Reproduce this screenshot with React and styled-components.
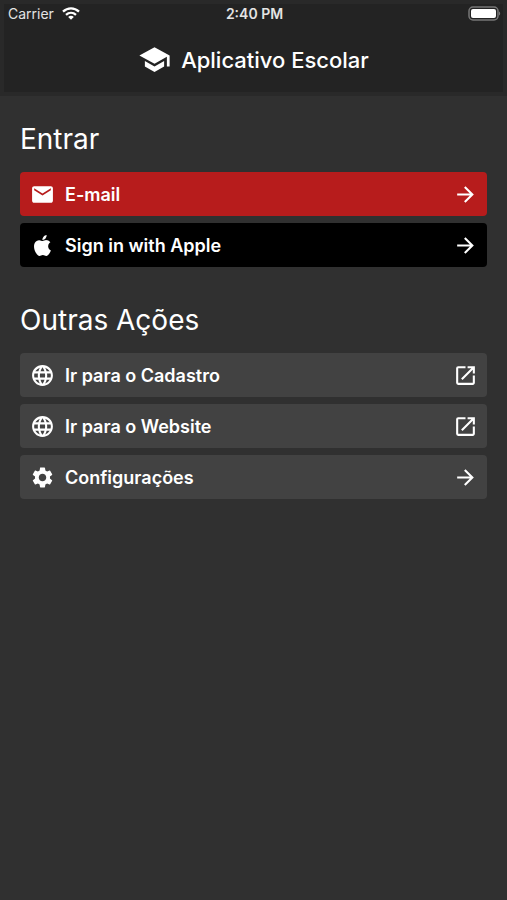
import React from "react";
import styled, { createGlobalStyle } from "styled-components";
import {
  MdArrowForward,
  MdEmail,
  MdLanguage,
  MdSchool,
  MdSettings,
} from "react-icons/md";

const GlobalStyle = createGlobalStyle`
  * {
    box-sizing: border-box;
  }
  body {
    margin: 0;
    background-color: #303030;
    color: #fff;
    font-family: Inter, "Liberation Sans", sans-serif;
  }
`;

const Screen = styled.div`
  min-height: 100vh;
  background-color: #303030;
`;

const Header = styled.header`
  height: 96px;
  border: 4px solid #292929;
  background-color: #232323;
`;

const StatusBar = styled.div`
  display: grid;
  grid-template-columns: 1fr auto 1fr;
  align-items: center;
  height: 19px;
  padding: 0 2px 0 4px;
  font-size: 14px;
  color: #e4e4e4;
`;

const Carrier = styled.span`
  display: flex;
  align-items: center;
  gap: 8px;
`;

const Clock = styled.time`
  font-weight: 600;
`;

const Battery = styled.svg`
  justify-self: end;
`;

const Brand = styled.div`
  display: flex;
  justify-content: center;
  align-items: center;
  gap: 10px;
  height: 67px;
  padding-top: 6px;
`;

const Title = styled.h1`
  margin: 0;
  font-size: 22px;
  line-height: 32px;
  font-weight: 500;
`;

const Main = styled.main`
  padding: 24px 20px;
`;

const Section = styled.section`
  margin-bottom: 34px;
`;

const Heading = styled.h2`
  margin: 0 0 14px;
  font-size: 28px;
  line-height: 38px;
  font-weight: 400;
`;

const Actions = styled.div`
  display: flex;
  flex-direction: column;
  gap: 7px;
`;

const ActionButton = styled.button`
  display: flex;
  align-items: center;
  gap: 10px;
  width: 100%;
  height: 44px;
  padding: 0 9px 0 10px;
  border: none;
  border-radius: 4px;
  color: white;
  background-color: ${({ $color }) => $color || "#424242"};
  font-family: inherit;
  font-size: 18px;
  font-weight: 600;
  text-align: left;
  text-decoration: none;
  cursor: pointer;
`;

const Label = styled.span`
  flex: 1;
`;

function WifiIcon() {
  return (
    <svg width="18" height="13" viewBox="0 0 18 13" fill="none" stroke="#fff" strokeWidth="2.3" aria-hidden="true">
      <path d="M1 4.6C5.6 0.3 12.4 0.3 17 4.6" />
      <path d="M4 7.9C6.9 5.3 11.1 5.3 14 7.9" />
      <path d="M9 12.7 6.2 9.9C7.8 8.5 10.2 8.5 11.8 9.9Z" fill="#fff" stroke="none" />
    </svg>
  );
}

function AppleIcon() {
  return (
    <svg width="25" height="25" viewBox="0 0 24 24" fill="currentColor" aria-hidden="true">
      <path d="M18.71 19.5c-.83 1.24-1.71 2.45-3.05 2.47-1.34.03-1.77-.79-3.29-.79-1.53 0-2 .77-3.27.82-1.31.05-2.3-1.32-3.14-2.53C4.25 17 2.94 12.45 4.7 9.39c.87-1.52 2.43-2.48 4.12-2.51 1.28-.02 2.5.87 3.29.87.78 0 2.26-1.07 3.81-.91.65.03 2.47.26 3.64 1.98-.09.06-2.17 1.28-2.15 3.81.03 3.02 2.65 4.03 2.68 4.04-.03.07-.42 1.44-1.38 2.83M13 3.5c.73-.83 1.94-1.46 2.94-1.5.13 1.17-.34 2.35-1.04 3.19-.69.85-1.83 1.51-2.95 1.42-.15-1.15.41-2.35 1.05-3.11z" />
    </svg>
  );
}

function OpenIcon() {
  return (
    <svg width="25" height="25" viewBox="0 0 24 24" fill="currentColor" aria-hidden="true">
      <path d="M19 19H5V5h7V3H5a2 2 0 0 0-2 2v14a2 2 0 0 0 2 2h14c1.1 0 2-.9 2-2v-7h-2v7zM14 3v2h3.59l-9.83 9.83 1.41 1.41L19 6.41V10h2V3h-7z" />
    </svg>
  );
}

function App() {
  return (
    <Screen>
      <GlobalStyle />
      <Header>
        <StatusBar>
          <Carrier>
            Carrier
            <WifiIcon />
          </Carrier>
          <Clock>2:40 PM</Clock>
          <Battery width="33" height="15" viewBox="0 0 33 15" aria-hidden="true">
            <rect x="1" y="1" width="29" height="13" rx="4" fill="none" stroke="#777" strokeWidth="1.5" />
            <rect x="3" y="3" width="25" height="9" rx="2" fill="#fff" />
            <path d="M31 5.5c1.6.8 1.6 3.2 0 4z" fill="#777" />
          </Battery>
        </StatusBar>
        <Brand>
          <MdSchool size={33} />
          <Title>Aplicativo Escolar</Title>
        </Brand>
      </Header>
      <Main>
        <Section>
          <Heading>Entrar</Heading>
          <Actions>
            <ActionButton type="button" $color="#b71c1c">
              <MdEmail size={25} />
              <Label>E-mail</Label>
              <MdArrowForward size={25} />
            </ActionButton>
            <ActionButton type="button" $color="#000">
              <AppleIcon />
              <Label>Sign in with Apple</Label>
              <MdArrowForward size={25} />
            </ActionButton>
          </Actions>
        </Section>
        <Section>
          <Heading>Outras Ações</Heading>
          <Actions>
            <ActionButton as="a" href="#cadastro">
              <MdLanguage size={25} />
              <Label>Ir para o Cadastro</Label>
              <OpenIcon />
            </ActionButton>
            <ActionButton as="a" href="#website">
              <MdLanguage size={25} />
              <Label>Ir para o Website</Label>
              <OpenIcon />
            </ActionButton>
            <ActionButton type="button">
              <MdSettings size={25} />
              <Label>Configurações</Label>
              <MdArrowForward size={25} />
            </ActionButton>
          </Actions>
        </Section>
      </Main>
    </Screen>
  );
}

export default App;
